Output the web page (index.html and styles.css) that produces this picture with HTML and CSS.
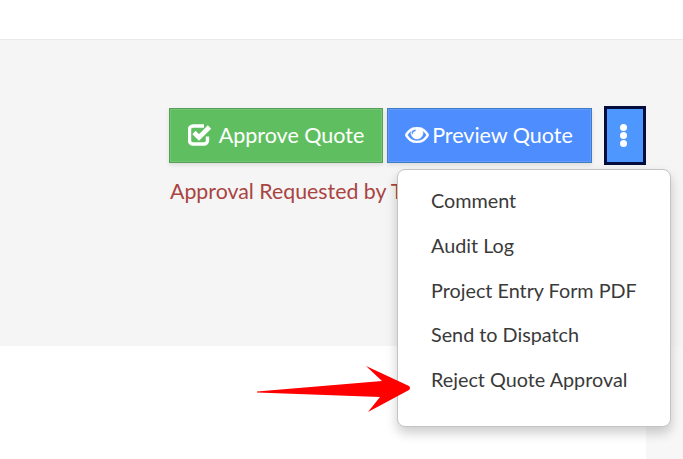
FILE: index.html
```html
<!DOCTYPE html>
<html lang="en">
<head>
<meta charset="utf-8">
<title>Quote</title>
<link rel="stylesheet" href="styles.css">
</head>
<body>
<header class="topbar"></header>
<section class="panel">
  <div class="actions">
    <button class="btn btn-approve">
      <svg class="ico-check" viewBox="0 0 24 22" width="24" height="22">
        <path d="M19.500 12.500V16.500a3.500 3.500 0 0 1-3.500 3.500H5a3.500 3.500 0 0 1-3.500-3.500V5.500A3.500 3.500 0 0 1 5 2h11" fill="none" stroke="#fff" stroke-width="3.400"/>
        <path d="M6 8.500l5 5L21.500 3" fill="none" stroke="#fff" stroke-width="4.600"/>
      </svg>
      <span>Approve Quote</span>
    </button>
    <button class="btn btn-preview">
      <svg class="ico-eye" viewBox="0 0 24 16" width="24" height="16">
        <path fill-rule="evenodd" fill="#fff" stroke="#fff" stroke-width=".5" d="M12 0C6.800 0 2.500 3 0 8c2.500 5 6.800 8 12 8s9.500-3 12-8c-2.500-5-6.800-8-12-8zM12 2c4 0 7.400 2.300 9.600 6-2.200 3.700-5.600 6-9.600 6s-7.400-2.300-9.600-6c1.100-1.900 2.500-3.400 4.200-4.500C6.200 4.300 6 5.100 6 6c0 3.300 2.700 6 6 6s6-2.700 6-6c0-.9-.2-1.700-.6-2.500C15.700 2.500 14 2 12 2zM11 3.500c0 .5-.4 1-1 1-1 0-1.800.8-1.800 1.800 0 .5-.4 1-1 1s-1-.5-1-1C6.200 4.200 8.200 2.500 10 2.500c.6 0 1 .4 1 1z"/>
      </svg>
      <span>Preview Quote</span>
    </button>
    <button class="kebab" aria-label="More">
      <i class="dot"></i><i class="dot"></i><i class="dot"></i>
    </button>
  </div>
  <p class="status">Approval Requested by T</p>
  <ul class="menu">
    <li>Comment</li>
    <li>Audit Log</li>
    <li>Project Entry Form PDF</li>
    <li>Send to Dispatch</li>
    <li>Reject Quote Approval</li>
  </ul>
  <svg class="arrow" viewBox="0 0 156 47" width="156" height="47">
    <path fill="#ff0000" d="M0 25.500L125 15L109 0L152 20Q154 22 152 24L111 46L123 31L0 26.500Z"/>
  </svg>
</section>
<main class="content">
  <div class="sheet"></div>
  <div class="rail"></div>
</main>
</body>
</html>
```
FILE: styles.css
```css
* { box-sizing: border-box; }
html, body { margin: 0; padding: 0; height: 100%; overflow: hidden; }
body { font-family: Lato, "Liberation Sans", sans-serif; background: #fff; color: #333; }
.topbar { height: 40px; background: #fff; border-bottom: 1px solid #e8e8e8; }
.panel { position: relative; height: 306px; background: #f5f5f5; padding: 66px 37px 0 169px; }
.actions { display: flex; align-items: center; }
.btn {
  display: flex; align-items: center; justify-content: center;
  height: 55px; border: 1px solid; color: #fff;
  font: 400 21.500px Lato, sans-serif;
  box-shadow: 0 2px 4px rgba(0,0,0,.1), inset 0 0 0 1px rgba(255,255,255,.12);
  padding: 0 0 2px;
}
.btn-approve { width: 214px; background: #5fbf60; border-color: #56a05a; gap: 7px; }
.btn-preview { width: 205px; margin-left: 4px; background: #4d8dfe; border-color: #3f7dc0; gap: 3px; padding-right: 1px; }
.kebab {
  width: 42px; height: 59px; margin-left: 12px; padding: 0 3px 1px 0;
  background: #4d97ff; border: 3px solid #050d3c;
  display: flex; flex-direction: column; align-items: center; justify-content: center; gap: 1px;
}
.dot { width: 7px; height: 7px; border-radius: 50%; background: #fff; display: block; }
.status { margin: 12px 0 0 1px; font-size: 21.330px; line-height: 28px; color: #a94442; white-space: nowrap; }
.menu {
  position: absolute; left: 397px; top: 129px; width: 274px; height: 258px;
  list-style: none; margin: 0; padding: 9.200px 0;
  background: #fff; border: 1px solid #c4c4c4; border-radius: 8px;
  box-shadow: 0 6px 12px rgba(0,0,0,.2);
}
.menu li { height: 44.700px; line-height: 43px; padding-left: 33px; font-size: 19.800px; color: #3a3a3a; white-space: nowrap; }
.arrow { position: absolute; left: 257px; top: 326px; z-index: 2; }
.content { display: flex; height: 113px; }
.sheet { width: 646px; background: #fff; }
.rail { flex: 1; background: #f7f7f7; }
```
